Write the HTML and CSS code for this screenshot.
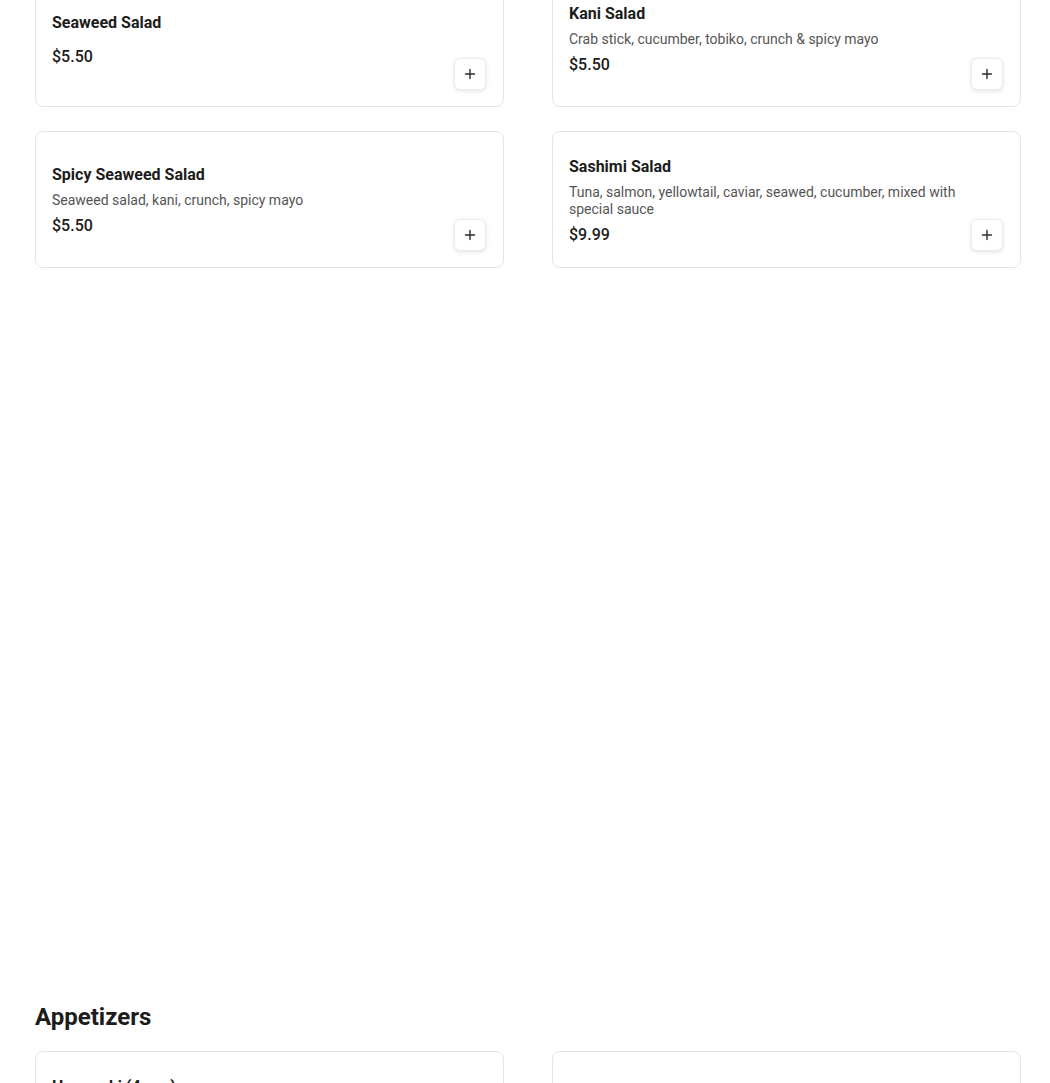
FILE: index.html
```html
<!DOCTYPE html>
<html lang="en">
<head>
<meta charset="utf-8">
<title>Menu</title>
<link rel="stylesheet" href="styles.css">
</head>
<body>
<main class="menu">
  <section class="section section-salads">
    <div class="grid grid-first">
      <article class="card">
        <div class="info">
          <h3 class="title">Seaweed Salad</h3>
          <p class="desc"></p>
          <div class="price">$5.50</div>
        </div>
        <button class="add" aria-label="Add"><svg viewBox="0 0 12 12" width="12" height="12"><path d="M6 1.5v9M1.5 6h9" stroke="#2b2b2b" stroke-width="1.4" stroke-linecap="round"/></svg></button>
      </article>
      <article class="card">
        <div class="info">
          <h3 class="title">Kani Salad</h3>
          <p class="desc">Crab stick, cucumber, tobiko, crunch &amp; spicy mayo</p>
          <div class="price">$5.50</div>
        </div>
        <button class="add" aria-label="Add"><svg viewBox="0 0 12 12" width="12" height="12"><path d="M6 1.5v9M1.5 6h9" stroke="#2b2b2b" stroke-width="1.4" stroke-linecap="round"/></svg></button>
      </article>
      <article class="card">
        <div class="info">
          <h3 class="title">Spicy Seaweed Salad</h3>
          <p class="desc">Seaweed salad, kani, crunch, spicy mayo</p>
          <div class="price">$5.50</div>
        </div>
        <button class="add" aria-label="Add"><svg viewBox="0 0 12 12" width="12" height="12"><path d="M6 1.5v9M1.5 6h9" stroke="#2b2b2b" stroke-width="1.4" stroke-linecap="round"/></svg></button>
      </article>
      <article class="card">
        <div class="info">
          <h3 class="title">Sashimi Salad</h3>
          <p class="desc">Tuna, salmon, yellowtail, caviar, seawed, cucumber, mixed with special sauce</p>
          <div class="price">$9.99</div>
        </div>
        <button class="add" aria-label="Add"><svg viewBox="0 0 12 12" width="12" height="12"><path d="M6 1.5v9M1.5 6h9" stroke="#2b2b2b" stroke-width="1.4" stroke-linecap="round"/></svg></button>
      </article>
    </div>
  </section>

  <section class="section">
    <h2 class="section-title">Appetizers</h2>
    <div class="grid">
      <article class="card">
        <div class="info">
          <h3 class="title">Harumaki (4 pcs)</h3>
          <p class="desc">Crispy spring rolls filled with vegetables, served with sweet chili sauce</p>
          <div class="price">$5.95</div>
        </div>
        <button class="add" aria-label="Add"><svg viewBox="0 0 12 12" width="12" height="12"><path d="M6 1.5v9M1.5 6h9" stroke="#2b2b2b" stroke-width="1.4" stroke-linecap="round"/></svg></button>
      </article>
      <article class="card">
        <div class="info">
          <h3 class="title">Edamame</h3>
          <p class="desc"></p>
          <div class="price">$4.95</div>
        </div>
        <button class="add" aria-label="Add"><svg viewBox="0 0 12 12" width="12" height="12"><path d="M6 1.5v9M1.5 6h9" stroke="#2b2b2b" stroke-width="1.4" stroke-linecap="round"/></svg></button>
      </article>
    </div>
  </section>
</main>
</body>
</html>
```

FILE: styles.css
```css
* { box-sizing: border-box; }
html, body { margin: 0; padding: 0; background: #ffffff; }
body {
  font-family: Roboto, "Liberation Sans", Arial, sans-serif;
  color: #1c1c1c;
  overflow: hidden;
}
.menu {
  width: 986px;
  margin-left: 35px;
}
.section-salads {
  margin-bottom: 733px;
}
.grid {
  display: grid;
  grid-template-columns: 1fr 1fr;
  column-gap: 48px;
  row-gap: 24px;
}
.grid-first {
  margin-top: -30px;
}
.section-title {
  margin: 0 0 18px;
  font-size: 24px;
  line-height: 32px;
  font-weight: 700;
  color: #1c1c1c;
}
.card {
  display: flex;
  gap: 12px;
  min-height: 137px;
  padding: 18px 17px 16px 16px;
  border: 1px solid #e3e3e3;
  border-radius: 8px;
  background: #fff;
}
.info {
  flex: 1;
  align-self: center;
  display: flex;
  flex-direction: column;
  gap: 6px;
}
.title {
  margin: 0;
  font-size: 16px;
  line-height: 22px;
  font-weight: 700;
  color: #1c1c1c;
}
.desc {
  margin: 0;
  font-size: 14px;
  line-height: 17px;
  color: #555555;
}
.price {
  font-size: 16px;
  line-height: 22px;
  font-weight: 500;
  color: #1c1c1c;
}
.add {
  align-self: flex-end;
  flex: none;
  width: 32px;
  height: 32px;
  padding: 0;
  display: flex;
  align-items: center;
  justify-content: center;
  background: #fff;
  border: 1px solid #ececec;
  border-radius: 6px;
  box-shadow: 0 1px 4px rgba(0, 0, 0, 0.12);
  cursor: pointer;
}
.add svg { display: block; }
```
